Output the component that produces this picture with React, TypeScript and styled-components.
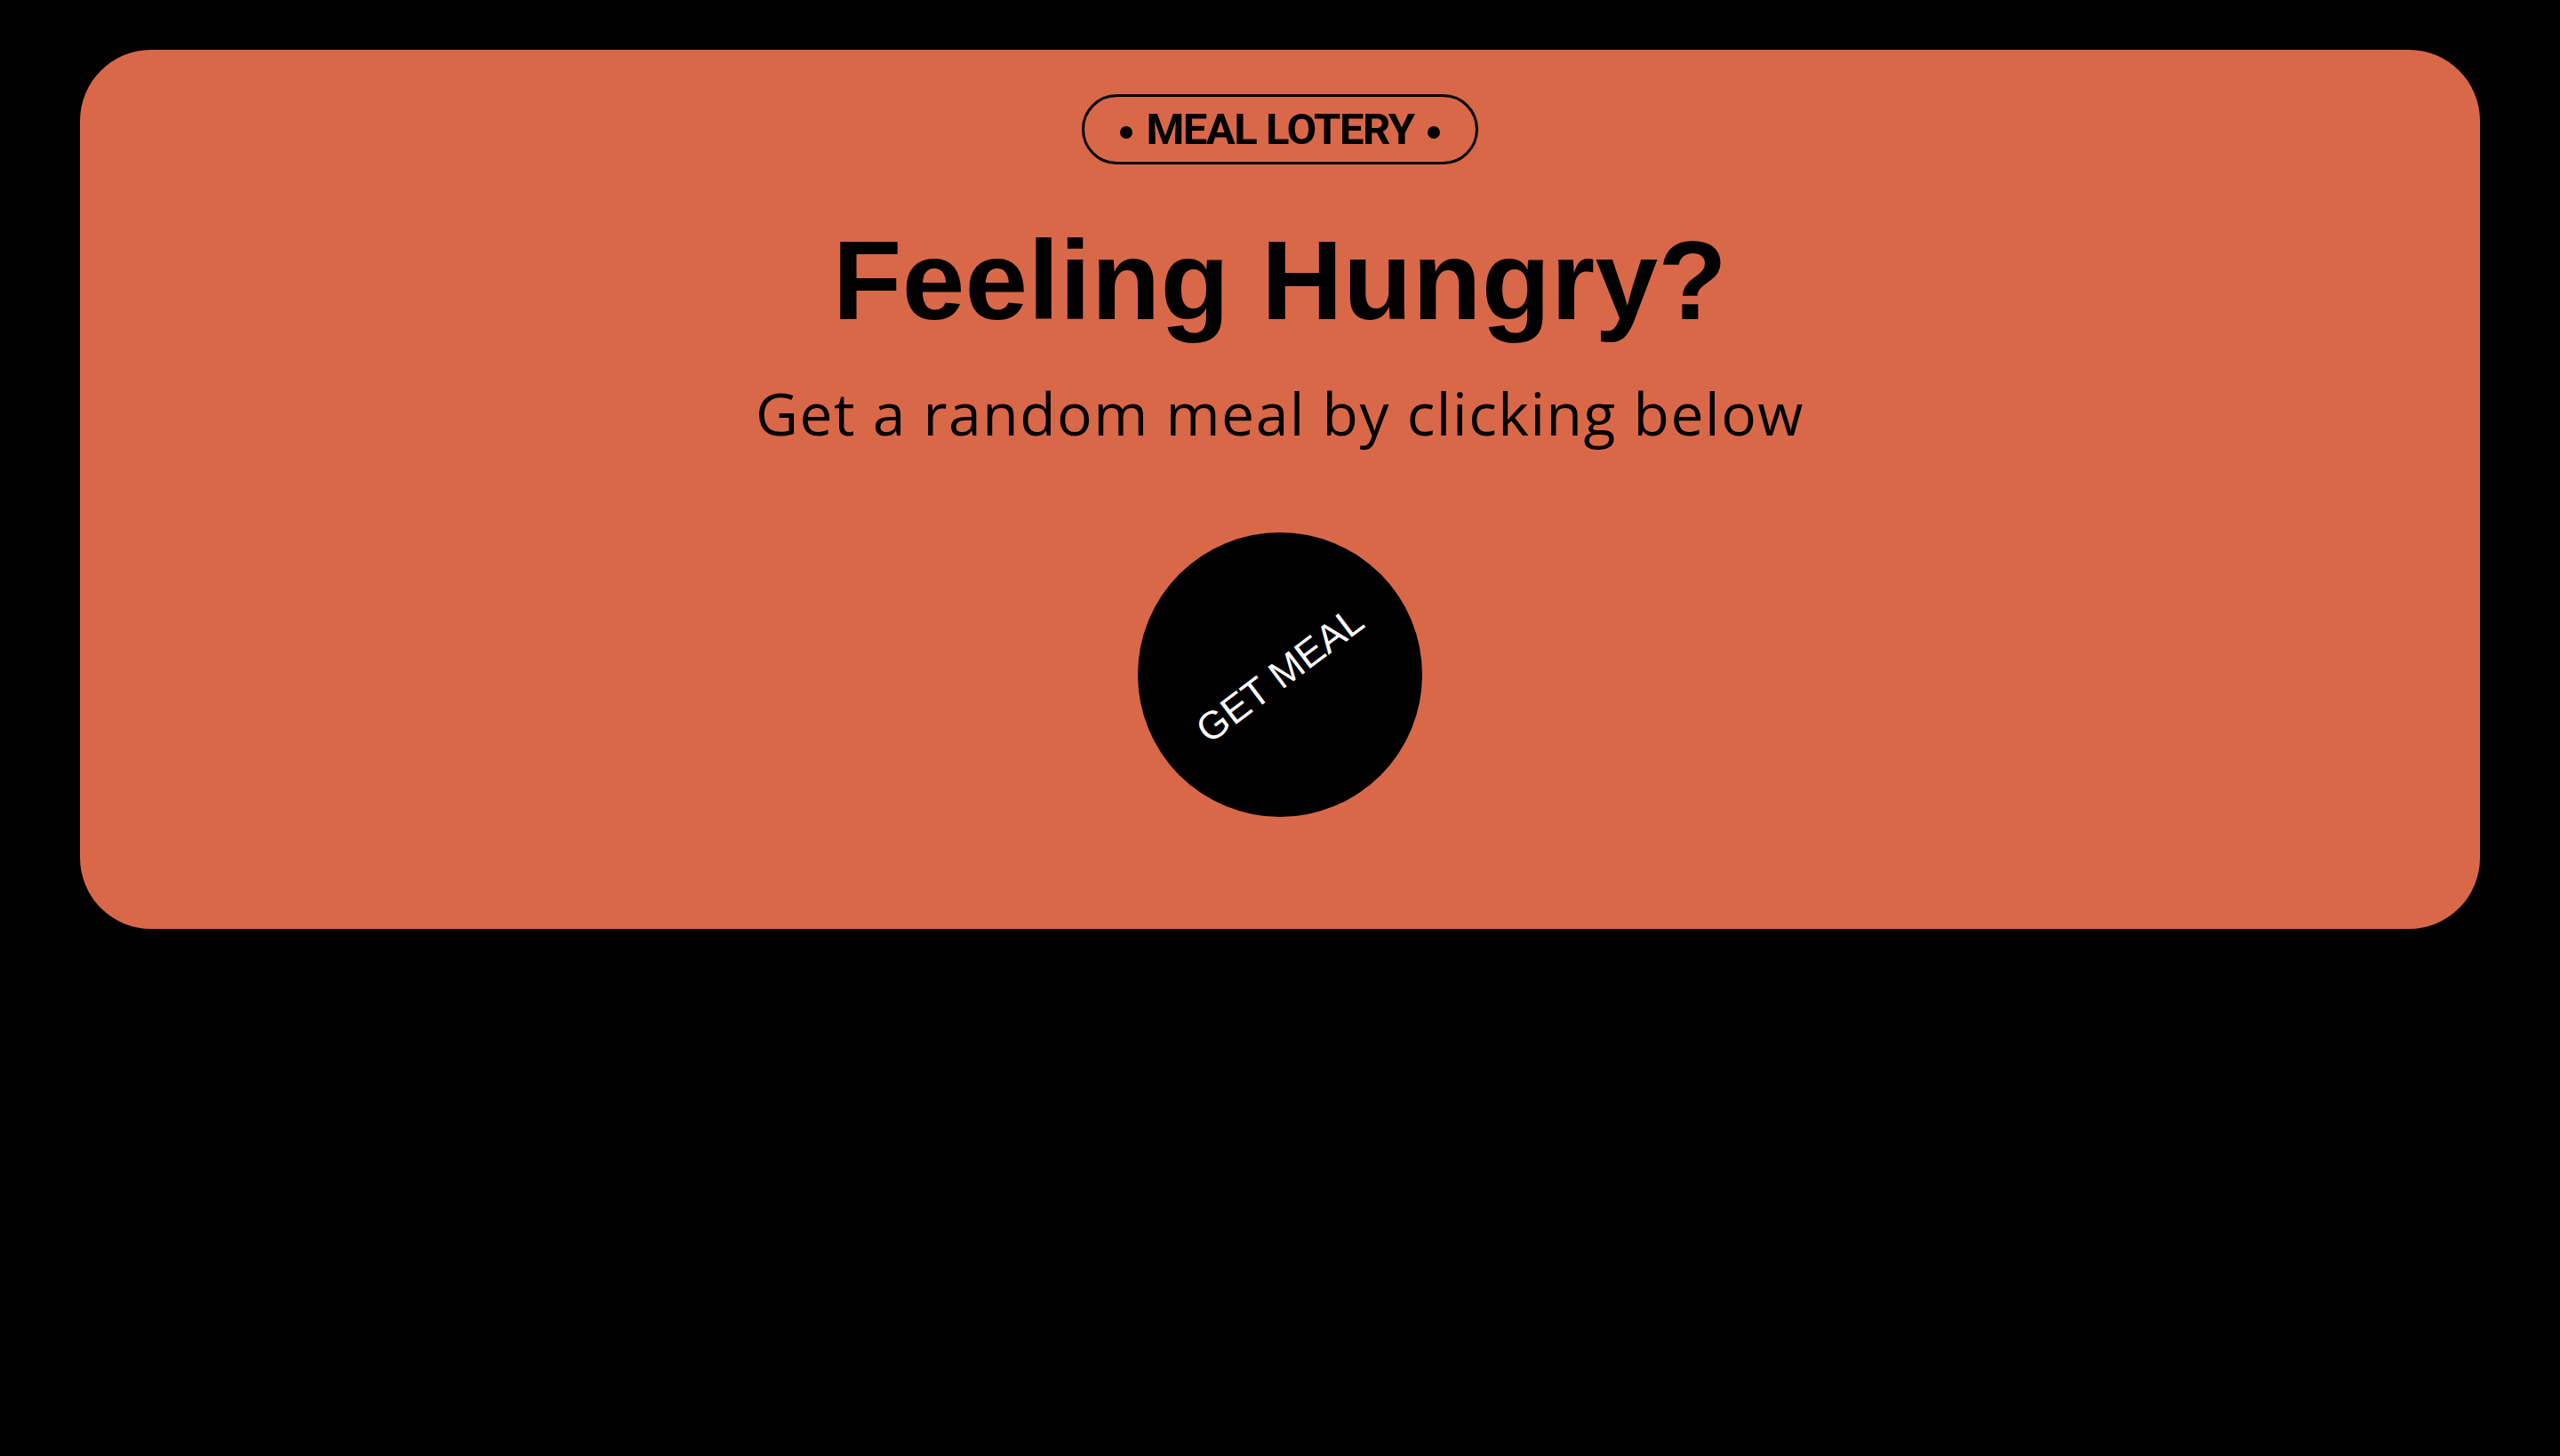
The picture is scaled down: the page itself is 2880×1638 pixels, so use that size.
import React from "react";
import styled, { createGlobalStyle } from "styled-components";

const Global = createGlobalStyle`
  html, body {
    margin: 0;
    padding: 0;
    background: #000;
  }
  * { box-sizing: border-box; }
`;

const Page = styled.div`
  min-height: 1638px;
  background: #000;
  padding: 56px 90px;
`;

const Card = styled.section`
  background: #d96849;
  border-radius: 80px;
  height: 989px;
  display: flex;
  flex-direction: column;
  align-items: center;
  padding-top: 50px;
`;

const Badge = styled.div`
  height: 79px;
  border: 3px solid #000;
  border-radius: 40px;
  padding: 0 40px;
  display: flex;
  align-items: center;
  gap: 15px;
`;

const Dot = styled.span`
  width: 14px;
  height: 14px;
  border-radius: 50%;
  background: #000;
  margin-top: 7px;
`;

const BadgeText = styled.span`
  font-family: Roboto, "Liberation Sans", sans-serif;
  font-weight: 700;
  font-size: 49px;
  line-height: 1;
  letter-spacing: -1.5px;
  color: #000;
`;

const Title = styled.h1`
  margin: 67px 0 0;
  font-family: "Liberation Sans", Arial, sans-serif;
  font-weight: 700;
  font-size: 127px;
  line-height: 1;
  letter-spacing: 0.3px;
  color: #000;
`;

const Subtitle = styled.p`
  margin: 52px 0 0;
  font-family: "Open Sans", "Liberation Sans", sans-serif;
  font-weight: 400;
  font-size: 66px;
  line-height: 1;
  letter-spacing: 1.5px;
  color: #000;
`;

const MealButton = styled.button`
  margin-top: 102px;
  width: 320px;
  height: 320px;
  border-radius: 50%;
  border: none;
  background: #000;
  color: #fff;
  display: flex;
  align-items: center;
  justify-content: center;
  cursor: pointer;
  padding: 0;
`;

const ButtonLabel = styled.span`
  display: inline-block;
  transform: rotate(-37deg);
  font-family: "Liberation Sans", Arial, sans-serif;
  font-weight: 400;
  font-size: 44px;
  line-height: 1;
  color: #fff;
  white-space: nowrap;
`;

export default function App() {
  return (
    <>
      <Global />
      <Page>
        <Card>
          <Badge>
            <Dot />
            <BadgeText>MEAL LOTERY</BadgeText>
            <Dot />
          </Badge>
          <Title>Feeling Hungry?</Title>
          <Subtitle>Get a random meal by clicking below</Subtitle>
          <MealButton>
            <ButtonLabel>GET MEAL</ButtonLabel>
          </MealButton>
        </Card>
      </Page>
    </>
  );
}
